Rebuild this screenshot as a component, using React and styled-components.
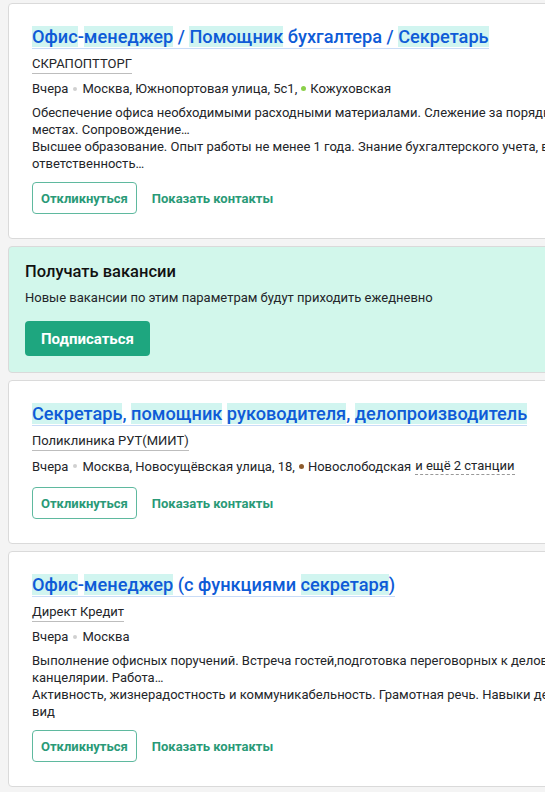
import React from 'react';
import styled, { createGlobalStyle } from 'styled-components';

const GlobalStyle = createGlobalStyle`
  html, body {
    margin: 0;
    padding: 0;
    background: #f4f4f4;
    overflow-x: hidden;
    font-family: Roboto, "Liberation Sans", Arial, sans-serif;
    color: #232529;
  }
`;

const Page = styled.div`
  width: 720px;
  padding: 3px 0 8px 8px;
  display: flex;
  flex-direction: column;
  gap: 7px;
`;

const Card = styled.div`
  background: ${p => (p.promo ? '#d2f7eb' : '#fff')};
  border: 1px solid #dadada;
  border-radius: 4px;
  padding: ${p => (p.promo ? '14px 16px 16px' : '21px 23px 24px')};
`;

const Title = styled.a`
  display: inline-block;
  font-size: 18.2px;
  font-weight: 500;
  line-height: 23px;
  color: #0e5bd7;
  text-decoration: none;
  border-bottom: 1px solid #c9dcf7;
  margin-bottom: 7px;
`;

const Mark = styled.span`
  background: #d1f5f0;
`;

const Company = styled.div`
  font-size: 13px;
  line-height: 16px;
  margin-bottom: 8px;
  & span {
    border-bottom: 1px solid #bdbdbd;
    padding-bottom: 2px;
  }
`;

const Meta = styled.div`
  font-size: 13px;
  line-height: 17px;
  display: flex;
  align-items: center;
  white-space: nowrap;
  margin-bottom: ${p => (p.last ? '12px' : '7px')};
`;

const Dot = styled.span`
  display: inline-block;
  width: ${p => (p.metro ? '5px' : '4px')};
  height: ${p => (p.metro ? '5px' : '4px')};
  border-radius: 50%;
  background: ${p => p.color || '#d0d0d0'};
  margin: 0 ${p => (p.metro ? '4px' : '5px')};
`;

const More = styled.span`
  margin-left: 4px;
  border-bottom: 1px dashed #999;
`;

const Desc = styled.p`
  margin: 0;
  font-size: 13px;
  line-height: 17px;
  white-space: nowrap;
  &:last-of-type {
    margin-bottom: 10px;
  }
`;

const Actions = styled.div`
  display: flex;
  align-items: center;
  gap: 15px;
`;

const Outline = styled.button`
  height: 32px;
  padding: 0 8px;
  border: 1px solid #5fb99f;
  border-radius: 4px;
  background: #fff;
  color: #2a9a77;
  font: 700 13px Roboto, "Liberation Sans", sans-serif;
`;

const TextLink = styled.a`
  color: #2a9a77;
  font-size: 13px;
  font-weight: 700;
`;

const PromoTitle = styled.h3`
  margin: 0 0 7px;
  font-size: 16.5px;
  font-weight: 500;
  line-height: 22px;
  color: #111;
`;

const PromoText = styled.div`
  font-size: 13px;
  line-height: 16px;
  margin-bottom: 15px;
`;

const Primary = styled.button`
  height: 35px;
  padding: 0 16px;
  border: none;
  border-radius: 4px;
  background: #1ea67f;
  color: #fff;
  font: 700 15px Roboto, "Liberation Sans", sans-serif;
`;

const HL = ({ parts }) =>
  parts.map((p, i) => (typeof p === 'string' ? <React.Fragment key={i}>{p}</React.Fragment> : <Mark key={i}>{p.m}</Mark>));

const vacancies = [
  {
    title: [{ m: 'Офис' }, '-', { m: 'менеджер' }, ' / ', { m: 'Помощник' }, ' бухгалтера / ', { m: 'Секретарь' }],
    company: 'СКРАПОПТТОРГ',
    address: 'Москва, Южнопортовая улица, 5с1,',
    metro: { name: 'Кожуховская', color: '#8bd04a' },
    desc: [
      ['Обеспечение офиса необходимыми расходными материалами. Слежение за порядком на рабочих', 'местах. Сопровождение…'],
      ['Высшее образование. Опыт работы не менее 1 года. Знание бухгалтерского учета, внимательность,', 'ответственность…'],
    ],
  },
  {
    title: [{ m: 'Секретарь' }, ', ', { m: 'помощник' }, ' ', { m: 'руководителя' }, ', ', { m: 'делопроизводитель' }],
    company: 'Поликлиника РУТ(МИИТ)',
    address: 'Москва, Новосущёвская улица, 18,',
    metro: { name: 'Новослободская', color: '#8d5b2d' },
    more: 'и ещё 2 станции',
  },
  {
    title: [{ m: 'Офис' }, '-', { m: 'менеджер' }, ' (с функциями ', { m: 'секретаря' }, ')'],
    company: 'Директ Кредит',
    address: 'Москва',
    desc: [
      ['Выполнение офисных поручений. Встреча гостей,подготовка переговорных к деловым встречам. Заказ', 'канцелярии. Работа…'],
      ['Активность, жизнерадостность и коммуникабельность. Грамотная речь. Навыки деловой переписки. Опрятный', 'вид'],
    ],
  },
];

const Vacancy = ({ v }) => (
  <Card>
    <Title href="#">
      <HL parts={v.title} />
    </Title>
    <Company>
      <span>{v.company}</span>
    </Company>
    <Meta last={!v.desc}>
      Вчера
      <Dot />
      {v.address}
      {v.metro && (
        <>
          <Dot metro color={v.metro.color} />
          {v.metro.name}
        </>
      )}
      {v.more && <More>{v.more}</More>}
    </Meta>
    {v.desc &&
      v.desc.map((d, i) => (
        <Desc key={i}>
          {d[0]}
          <br />
          {d[1]}
        </Desc>
      ))}
    <Actions>
      <Outline>Откликнуться</Outline>
      <TextLink>Показать контакты</TextLink>
    </Actions>
  </Card>
);

export default function App() {
  return (
    <>
      <GlobalStyle />
      <Page>
        <Vacancy v={vacancies[0]} />
        <Card promo>
          <PromoTitle>Получать вакансии</PromoTitle>
          <PromoText>Новые вакансии по этим параметрам будут приходить ежедневно</PromoText>
          <Primary>Подписаться</Primary>
        </Card>
        <Vacancy v={vacancies[1]} />
        <Vacancy v={vacancies[2]} />
      </Page>
    </>
  );
}
